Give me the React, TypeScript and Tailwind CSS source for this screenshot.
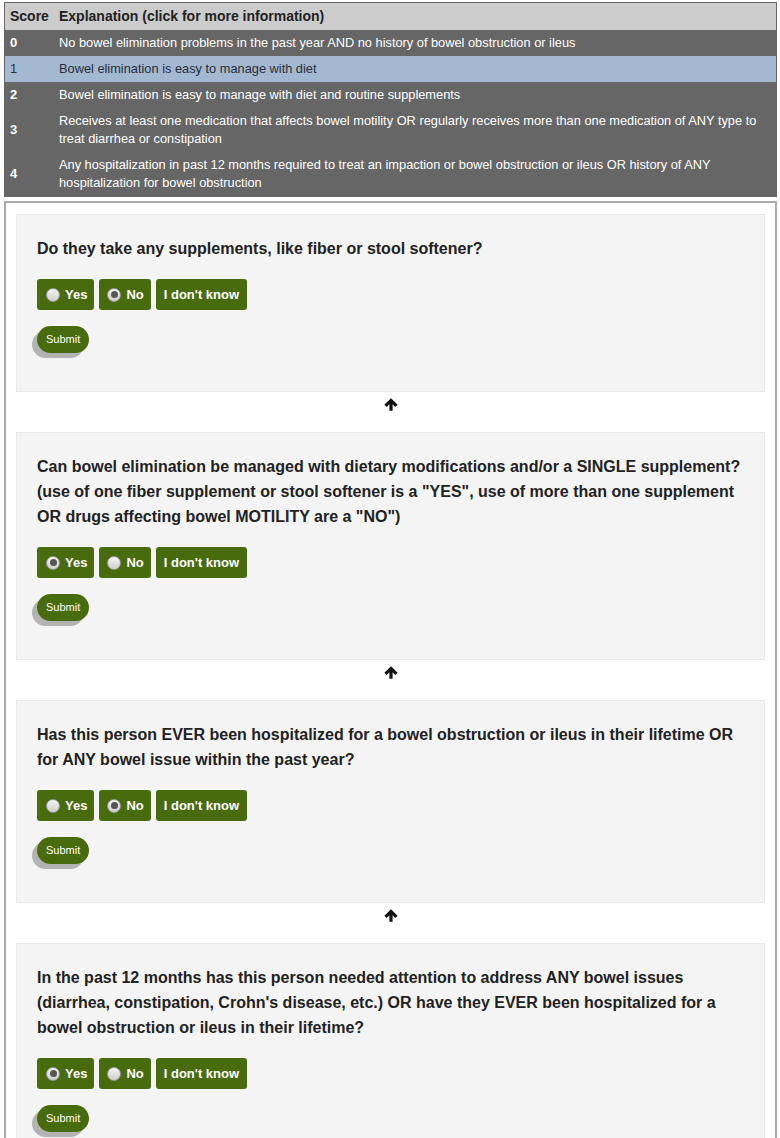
import React from "react";

const rows = [
  { s: "0", t: "No bowel elimination problems in the past year AND no history of bowel obstruction or ileus" },
  { s: "1", t: "Bowel elimination is easy to manage with diet", hl: true },
  { s: "2", t: "Bowel elimination is easy to manage with diet and routine supplements" },
  { s: "3", t: "Receives at least one medication that affects bowel motility OR regularly receives more than one medication of ANY type to treat diarrhea or constipation" },
  { s: "4", t: "Any hospitalization in past 12 months required to treat an impaction or bowel obstruction or ileus OR history of ANY hospitalization for bowel obstruction" },
];

const questions: { q: string; sel: "yes" | "no" }[] = [
  { q: "Do they take any supplements, like fiber or stool softener?", sel: "no" },
  {
    q: 'Can bowel elimination be managed with dietary modifications and/or a SINGLE supplement? (use of one fiber supplement or stool softener is a "YES", use of more than one supplement OR drugs affecting bowel MOTILITY are a "NO")',
    sel: "yes",
  },
  {
    q: "Has this person EVER been hospitalized for a bowel obstruction or ileus in their lifetime OR for ANY bowel issue within the past year?",
    sel: "no",
  },
  {
    q: "In the past 12 months has this person needed attention to address ANY bowel issues (diarrhea, constipation, Crohn's disease, etc.) OR have they EVER been hospitalized for a bowel obstruction or ileus in their lifetime?",
    sel: "yes",
  },
];

function Radio({ checked }: { checked: boolean }) {
  return (
    <span className="relative inline-flex h-[14px] w-[14px] items-center justify-center rounded-full border border-[#9a9a9a] bg-gradient-to-b from-[#f4f4f4] to-[#cfcfcf]">
      {checked && <span className="h-[7px] w-[7px] rounded-full bg-[#555]" />}
    </span>
  );
}

function Arrow() {
  return (
    <div className="flex h-[40px] items-start justify-center pt-[6px]">
      <svg width="14" height="13" viewBox="0 0 14 13">
        <path d="M7 0.3 L13.6 6.8 L11.3 8.9 L8.6 6.3 L8.6 12.7 L5.4 12.7 L5.4 6.3 L2.7 8.9 L0.4 6.8 Z" fill="#111" />
      </svg>
    </div>
  );
}

function Card({ q, sel }: { q: string; sel: "yes" | "no" }) {
  return (
    <div className="border border-[#e8e8e8] bg-[#f4f4f4] pt-[21px] pb-[38px] pl-[20px] pr-[20px]">
      <div className="text-[16px] font-bold leading-[25px] text-[#222]">{q}</div>
      <div className="mt-[18px] flex gap-[5px]">
        <div className="flex h-[31px] items-center gap-[5px] rounded-[3px] bg-[#486b0e] pl-[9px] pr-[7px] text-[13px] font-bold text-white">
          <Radio checked={sel === "yes"} />
          <span>Yes</span>
        </div>
        <div className="flex h-[31px] items-center gap-[5px] rounded-[3px] bg-[#486b0e] pl-[8px] pr-[7px] text-[13px] font-bold text-white">
          <Radio checked={sel === "no"} />
          <span>No</span>
        </div>
        <div className="flex h-[31px] items-center rounded-[3px] bg-[#486b0e] px-[8px] text-[13px] font-bold text-white">
          I don't know
        </div>
      </div>
      <div className="mt-[16px]">
        <button className="h-[27px] rounded-full bg-[#486b0e] px-[9px] text-[11px] text-white shadow-[-5px_5px_0_#b3b3b3]">
          Submit
        </button>
      </div>
    </div>
  );
}

export default function App() {
  return (
    <div className="min-h-[1138px] bg-white pt-[2px] font-['Liberation_Sans',Arial,sans-serif]">
      <div className="ml-[4px] w-[773px] border border-[#666] bg-[#666]">
        <div className="flex h-[27px] items-center bg-[#cccccc] text-[14px] font-bold text-[#222]">
          <div className="w-[54px] pl-[5px]">Score</div>
          <div>Explanation (click for more information)</div>
        </div>
        {rows.map((r) => (
          <div
            key={r.s}
            className={
              "flex items-center py-[4px] text-[12.8px] leading-[18px] " +
              (r.hl ? "bg-[#a3b8d1] text-[#2a2f3a]" : "bg-[#666] text-white")
            }
          >
            <div className={"w-[54px] shrink-0 pl-[5px] text-[13px] " + (r.hl ? "font-normal" : "font-bold")}>{r.s}</div>
            <div className="pr-[14px]">{r.t}</div>
          </div>
        ))}
      </div>
      <div className="ml-[4px] mt-[4px] w-[773px] border-2 border-[#aaa] px-[10px] pt-[11px] pb-[10px]">
        {questions.map((q, i) => (
          <React.Fragment key={i}>
            {i > 0 && <Arrow />}
            <Card q={q.q} sel={q.sel} />
          </React.Fragment>
        ))}
      </div>
    </div>
  );
}
